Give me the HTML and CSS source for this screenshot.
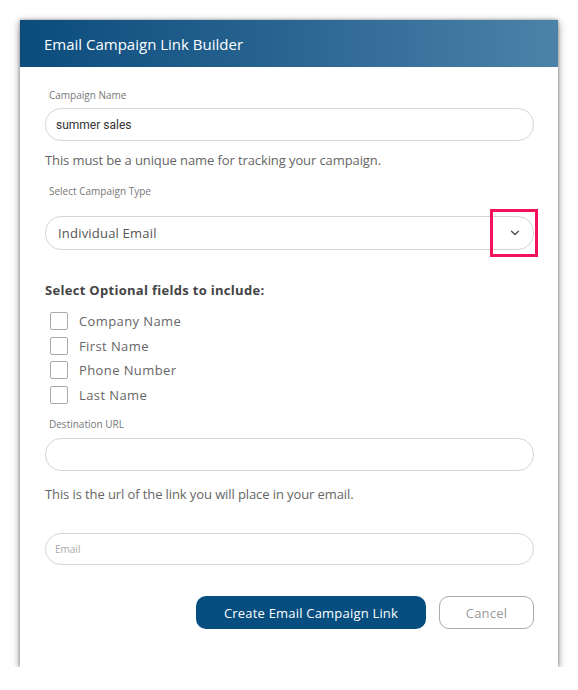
FILE: index.html
```html
<!DOCTYPE html>
<html lang="en">
<head>
<meta charset="utf-8">
<title>Email Campaign Link Builder</title>
<link rel="stylesheet" href="styles.css">
</head>
<body>
<div class="modal">
  <div class="modal-header">Email Campaign Link Builder</div>
  <div class="modal-body">
    <div class="label">Campaign Name</div>
    <div class="input input-value">summer sales</div>
    <div class="help">This must be a unique name for tracking your campaign.</div>
    <div class="label label-gap">Select Campaign Type</div>
    <div class="select">
      <span class="select-text">Individual Email</span>
      <svg class="chevron" width="10" height="6" viewBox="0 0 10 6"><path d="M1.5 1.2 L5 4.6 L8.5 1.2" fill="none" stroke="#555" stroke-width="1.4" stroke-linecap="round" stroke-linejoin="round"/></svg>
      <span class="highlight"></span>
    </div>
    <div class="section-title">Select Optional fields to include:</div>
    <div class="checks">
      <label class="check"><span class="box"></span>Company Name</label>
      <label class="check"><span class="box"></span>First Name</label>
      <label class="check"><span class="box"></span>Phone Number</label>
      <label class="check"><span class="box"></span>Last Name</label>
    </div>
    <div class="label label-url">Destination URL</div>
    <div class="input"></div>
    <div class="help help-url">This is the url of the link you will place in your email.</div>
    <div class="input input-email"><span class="placeholder">Email</span></div>
    <div class="actions">
      <button class="btn btn-primary">Create Email Campaign Link</button>
      <button class="btn btn-cancel">Cancel</button>
    </div>
  </div>
</div>
</body>
</html>
```
FILE: styles.css
```css
* { box-sizing: border-box; }
html, body { margin: 0; background: #fff; }
body {
  padding: 20px 0 0 20px;
  font-family: "Open Sans", "Liberation Sans", sans-serif;
}
.modal {
  width: 538px;
  background: #fff;
  box-shadow: 0 2px 8px rgba(0,0,0,0.45), 0 0 3px rgba(0,0,0,0.3);
}
.modal-header {
  height: 47px;
  padding-left: 24px;
  display: flex;
  align-items: center;
  color: #fff;
  font-size: 15px;
  background: linear-gradient(90deg, #0b4c7d 0%, #2a6592 50%, #4b82a8 100%);
}
.modal-body {
  padding: 21px 24px 38px 25px;
}
.label {
  font-size: 10px;
  line-height: 14px;
  color: #777;
  padding-left: 4px;
  margin-bottom: 6px;
}
.label-gap { margin-top: 15px; margin-bottom: 18px; }
.label-url { margin-top: 10px; margin-bottom: 7px; }
.input, .select {
  height: 33px;
  border: 1px solid #d6d6d6;
  border-radius: 16px;
  display: flex;
  align-items: center;
}
.input-value {
  padding-left: 10px;
  font-family: "Roboto", "Liberation Sans", sans-serif;
  font-size: 12px;
  color: #333;
}
.help {
  margin-top: 10px;
  font-size: 13px;
  line-height: 18px;
  color: #666;
  letter-spacing: -0.1px;
}
.help-url { margin-top: 14px; }
.select {
  position: relative;
  height: 34px;
  padding-left: 12px;
  padding-right: 13px;
  justify-content: space-between;
}
.select-text { font-size: 13px; color: #555; letter-spacing: 0.2px; }
.chevron { display: block; }
.highlight {
  position: absolute;
  left: 444px;
  top: -8px;
  width: 48px;
  height: 48px;
  border: 3px solid #f5125a;
}
.section-title {
  margin-top: 31px;
  font-size: 13px;
  line-height: 18px;
  font-weight: 700;
  color: #444;
  letter-spacing: 0.3px;
}
.checks {
  margin-top: 10px;
  display: flex;
  flex-direction: column;
}
.check {
  height: 24.5px;
  display: flex;
  align-items: center;
  font-size: 13px;
  color: #666;
  letter-spacing: 0.4px;
}
.box {
  width: 18px;
  height: 18px;
  border: 1px solid #aaa;
  border-radius: 2px;
  margin-left: 5px;
  margin-right: 11px;
}
.input-email {
  margin-top: 30px;
  height: 32px;
  padding-left: 9px;
}
.placeholder { font-size: 10px; color: #aaa; }
.actions {
  margin-top: 31px;
  display: flex;
  justify-content: flex-end;
  gap: 13px;
}
.btn {
  height: 33px;
  border-radius: 10px;
  font-family: inherit;
  font-size: 13px;
  letter-spacing: 0.2px;
  cursor: pointer;
}
.btn-primary {
  width: 230px;
  background: #064e80;
  color: #fff;
  border: none;
}
.btn-cancel {
  width: 95px;
  background: #fff;
  color: #999;
  border: 1px solid #a9a9a9;
}
```
